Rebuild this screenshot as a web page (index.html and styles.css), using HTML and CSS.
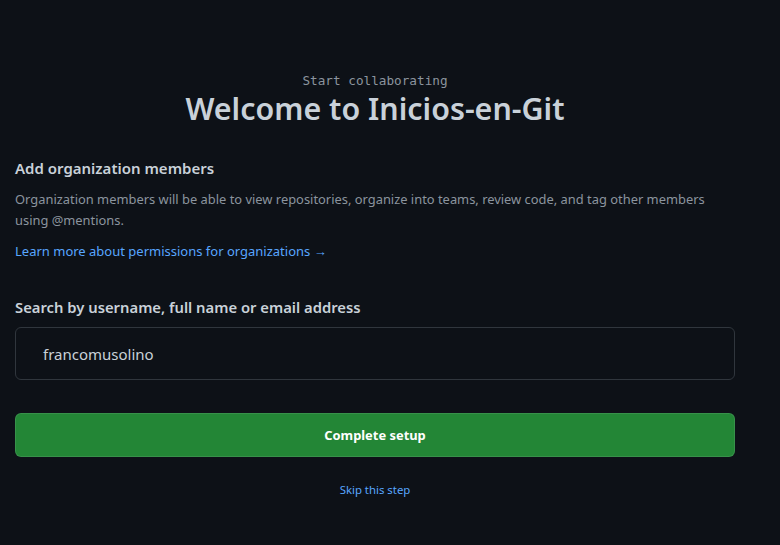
FILE: index.html
```html
<!DOCTYPE html>
<html>
<head>
<meta charset="utf-8">
<link rel="stylesheet" href="styles.css">
</head>
<body>
<main class="page">
  <header class="hero">
    <p class="eyebrow">Start collaborating</p>
    <h1 class="title">Welcome to Inicios-en-Git</h1>
  </header>
  <section class="members">
    <h2 class="section-title">Add organization members</h2>
    <p class="desc">Organization members will be able to view repositories, organize into teams, review code, and tag other members using @mentions.</p>
    <a class="link" href="#">Learn more about permissions for organizations →</a>
  </section>
  <section class="search">
    <label class="label" for="q">Search by username, full name or email address</label>
    <div class="input"><span id="q">francomusolino</span></div>
    <button class="btn">Complete setup</button>
    <a class="skip" href="#">Skip this step</a>
  </section>
</main>
</body>
</html>
```
FILE: styles.css
```css
html, body {
  margin: 0;
  padding: 0;
  background: #0d1117;
  height: 100%;
}
body {
  font-family: "Noto Sans", "Open Sans", sans-serif;
  color: #c9d1d9;
}
.page {
  width: 720px;
  padding: 73px 0 0 15px;
  display: flex;
  flex-direction: column;
}
.hero {
  text-align: center;
}
.eyebrow {
  margin: 0;
  font-family: "DejaVu Sans Mono", "Liberation Mono", monospace;
  font-size: 12.7px;
  line-height: 16px;
  color: #8b949e;
}
.title {
  margin: 0;
  font-size: 30.4px;
  font-weight: 600;
  line-height: 40px;
  color: #c9d1d9;
}
.members {
  margin-top: 27px;
}
.section-title {
  margin: 0;
  font-size: 15px;
  font-weight: 600;
  line-height: 24px;
}
.desc {
  margin: 9px 0 0;
  font-size: 12.9px;
  line-height: 21px;
  color: #8b949e;
}
.link {
  display: block;
  margin-top: 10px;
  font-size: 13px;
  line-height: 21px;
  color: #58a6ff;
  text-decoration: none;
}
.search {
  margin-top: 33px;
  display: flex;
  flex-direction: column;
}
.label {
  font-size: 14.8px;
  font-weight: 600;
  line-height: 24px;
}
.input {
  margin-top: 8px;
  height: 51px;
  border: 1px solid #30363d;
  border-radius: 6px;
  box-sizing: content-box;
  display: flex;
  align-items: center;
  padding-left: 27px;
  font-size: 15px;
  color: #c9d1d9;
}
.btn {
  margin-top: 33px;
  height: 44px;
  background: #238636;
  border: 1px solid rgba(240,246,252,0.1);
  border-radius: 6px;
  color: #fff;
  font-family: inherit;
  font-size: 12.9px;
  font-weight: 700;
}
.skip {
  margin-top: 24px;
  align-self: center;
  font-size: 11.4px;
  line-height: 18px;
  color: #58a6ff;
  text-decoration: none;
}
```
